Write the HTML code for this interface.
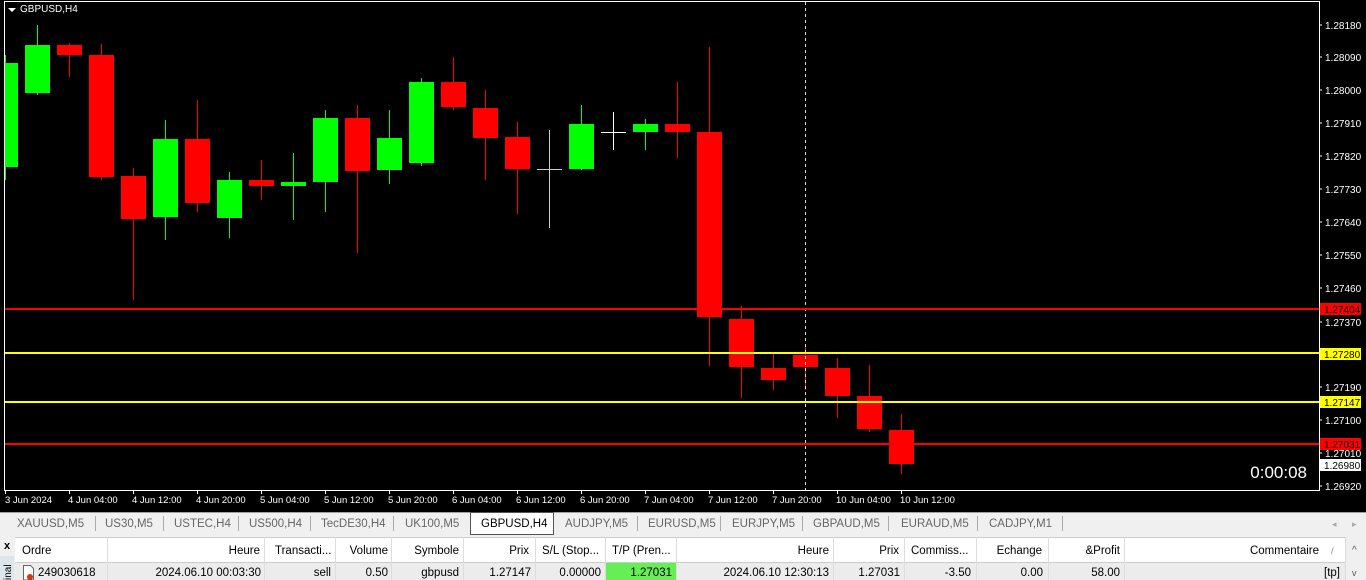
<!DOCTYPE html>
<html><head><meta charset="utf-8"><style>
html,body{margin:0;padding:0;background:#f0f0f0;width:1366px;height:580px;overflow:hidden}
svg{display:block}
text{font-family:"Liberation Sans",sans-serif}
</style></head><body>
<svg width="1366" height="580" xmlns="http://www.w3.org/2000/svg">
<rect x="0" y="0" width="1366" height="512" fill="#000"/>
<rect x="4.5" y="1.5" width="1315" height="489" fill="none" stroke="#fff" stroke-width="1"/>
<g stroke-width="1">
<line x1="5.5" y1="55" x2="5.5" y2="180" stroke="#00ff00"/><rect x="5" y="63" width="13" height="104" fill="#00ff00"/>
<line x1="37.5" y1="25" x2="37.5" y2="95" stroke="#00ff00"/><rect x="25" y="45" width="25" height="48" fill="#00ff00"/>
<line x1="69.5" y1="43" x2="69.5" y2="77" stroke="#f00"/><rect x="57" y="45" width="25" height="10" fill="#f00"/>
<line x1="101.5" y1="44" x2="101.5" y2="180" stroke="#f00"/><rect x="89" y="55" width="25" height="122" fill="#f00"/>
<line x1="133.5" y1="168" x2="133.5" y2="300" stroke="#f00"/><rect x="121" y="176" width="25" height="43" fill="#f00"/>
<line x1="165.5" y1="120" x2="165.5" y2="240" stroke="#00ff00"/><rect x="153" y="139" width="25" height="78" fill="#00ff00"/>
<line x1="197.5" y1="100" x2="197.5" y2="212" stroke="#f00"/><rect x="185" y="139" width="25" height="64" fill="#f00"/>
<line x1="229.5" y1="172" x2="229.5" y2="238" stroke="#00ff00"/><rect x="217" y="180" width="25" height="38" fill="#00ff00"/>
<line x1="261.5" y1="160" x2="261.5" y2="200" stroke="#f00"/><rect x="249" y="180" width="25" height="6" fill="#f00"/>
<line x1="293.5" y1="153" x2="293.5" y2="220" stroke="#00ff00"/><rect x="281" y="182" width="25" height="4" fill="#00ff00"/>
<line x1="325.5" y1="110" x2="325.5" y2="212" stroke="#00ff00"/><rect x="313" y="118" width="25" height="64" fill="#00ff00"/>
<line x1="357.5" y1="105" x2="357.5" y2="253" stroke="#f00"/><rect x="345" y="118" width="25" height="53" fill="#f00"/>
<line x1="389.5" y1="110" x2="389.5" y2="184" stroke="#00ff00"/><rect x="377" y="138" width="25" height="32" fill="#00ff00"/>
<line x1="421.5" y1="78" x2="421.5" y2="166" stroke="#00ff00"/><rect x="409" y="82" width="25" height="81" fill="#00ff00"/>
<line x1="453.5" y1="57" x2="453.5" y2="110" stroke="#f00"/><rect x="441" y="82" width="25" height="25" fill="#f00"/>
<line x1="485.5" y1="90" x2="485.5" y2="180" stroke="#f00"/><rect x="473" y="108" width="25" height="30" fill="#f00"/>
<line x1="517.5" y1="122" x2="517.5" y2="214" stroke="#f00"/><rect x="505" y="137" width="25" height="32" fill="#f00"/>
<line x1="549.5" y1="130" x2="549.5" y2="228" stroke="#ccc"/><line x1="537" y1="169.5" x2="562" y2="169.5" stroke="#ccc"/>
<line x1="581.5" y1="105" x2="581.5" y2="170" stroke="#00ff00"/><rect x="569" y="124" width="25" height="45" fill="#00ff00"/>
<line x1="613.5" y1="112" x2="613.5" y2="150" stroke="#fff"/><line x1="601" y1="132.5" x2="626" y2="132.5" stroke="#fff"/>
<line x1="645.5" y1="119" x2="645.5" y2="150" stroke="#00ff00"/><rect x="633" y="124" width="25" height="8" fill="#00ff00"/>
<line x1="677.5" y1="82" x2="677.5" y2="158" stroke="#f00"/><rect x="665" y="124" width="25" height="8" fill="#f00"/>
<line x1="709.5" y1="47" x2="709.5" y2="366" stroke="#f00"/><rect x="697" y="132" width="25" height="185" fill="#f00"/>
<line x1="741.5" y1="306" x2="741.5" y2="398" stroke="#f00"/><rect x="729" y="319" width="25" height="48" fill="#f00"/>
<line x1="773.5" y1="354" x2="773.5" y2="390" stroke="#f00"/><rect x="761" y="368" width="25" height="12" fill="#f00"/>
<line x1="805.5" y1="345" x2="805.5" y2="390" stroke="#f00"/><rect x="793" y="355" width="25" height="12" fill="#f00"/>
<line x1="837.5" y1="358" x2="837.5" y2="418" stroke="#f00"/><rect x="825" y="368" width="25" height="28" fill="#f00"/>
<line x1="869.5" y1="365" x2="869.5" y2="432" stroke="#f00"/><rect x="857" y="396" width="25" height="33" fill="#f00"/>
<line x1="901.5" y1="414" x2="901.5" y2="474" stroke="#f00"/><rect x="889" y="430" width="25" height="34" fill="#f00"/>
</g>
<line x1="805.5" y1="2" x2="805.5" y2="490" stroke="#ddd" stroke-dasharray="3,3"/>
<line x1="5" y1="309" x2="1319" y2="309" stroke="#f00" stroke-width="2"/>
<line x1="5" y1="353" x2="1319" y2="353" stroke="#ff0" stroke-width="2"/>
<line x1="5" y1="402" x2="1319" y2="402" stroke="#ff0" stroke-width="2"/>
<line x1="5" y1="444" x2="1319" y2="444" stroke="#f00" stroke-width="2"/>
<polygon points="8,8 16,8 12,12" fill="#fff"/>
<text x="20" y="12" font-size="10" fill="#fff">GBPUSD,H4</text>
<text x="1307" y="478" font-size="17" fill="#fff" text-anchor="end">0:00:08</text>
<g font-size="10" fill="#fff">
<text x="1325" y="29">1.28180</text><text x="1325" y="61">1.28090</text><text x="1325" y="94">1.28000</text>
<text x="1325" y="127">1.27910</text><text x="1325" y="160">1.27820</text><text x="1325" y="193">1.27730</text>
<text x="1325" y="226">1.27640</text><text x="1325" y="259">1.27550</text><text x="1325" y="292">1.27460</text>
<text x="1325" y="326">1.27370</text><text x="1325" y="391">1.27190</text><text x="1325" y="424">1.27100</text>
<text x="1325" y="457">1.27010</text><text x="1325" y="490">1.26920</text>
</g>
<g stroke="#fff"><line x1="1319" y1="25" x2="1322" y2="25"/><line x1="1319" y1="57" x2="1322" y2="57"/><line x1="1319" y1="90" x2="1322" y2="90"/><line x1="1319" y1="123" x2="1322" y2="123"/><line x1="1319" y1="156" x2="1322" y2="156"/><line x1="1319" y1="189" x2="1322" y2="189"/><line x1="1319" y1="222" x2="1322" y2="222"/><line x1="1319" y1="255" x2="1322" y2="255"/><line x1="1319" y1="288" x2="1322" y2="288"/><line x1="1319" y1="322" x2="1322" y2="322"/><line x1="1319" y1="387" x2="1322" y2="387"/><line x1="1319" y1="420" x2="1322" y2="420"/><line x1="1319" y1="453" x2="1322" y2="453"/><line x1="1319" y1="486" x2="1322" y2="486"/></g>
<rect x="1320" y="303" width="41" height="12" fill="#f00"/><text x="1324" y="313" font-size="10" fill="#000">1.27404</text>
<rect x="1320" y="348" width="41" height="12" fill="#ff0"/><text x="1324" y="358" font-size="10" fill="#000">1.27280</text>
<rect x="1320" y="396" width="41" height="12" fill="#ff0"/><text x="1324" y="406" font-size="10" fill="#000">1.27147</text>
<rect x="1320" y="438" width="41" height="12" fill="#f00"/><text x="1324" y="448" font-size="10" fill="#000">1.27031</text>
<rect x="1320" y="459" width="41" height="12" fill="#fff"/><text x="1324" y="469" font-size="10" fill="#000">1.26980</text>
<g font-size="9.5" fill="#fff">
<text x="5" y="503">3 Jun 2024</text><text x="68" y="503">4 Jun 04:00</text><text x="132" y="503">4 Jun 12:00</text><text x="196" y="503">4 Jun 20:00</text><text x="260" y="503">5 Jun 04:00</text><text x="324" y="503">5 Jun 12:00</text><text x="388" y="503">5 Jun 20:00</text><text x="452" y="503">6 Jun 04:00</text><text x="516" y="503">6 Jun 12:00</text><text x="580" y="503">6 Jun 20:00</text><text x="644" y="503">7 Jun 04:00</text><text x="708" y="503">7 Jun 12:00</text><text x="772" y="503">7 Jun 20:00</text><text x="836" y="503">10 Jun 04:00</text><text x="900" y="503">10 Jun 12:00</text>
</g>
<g stroke="#fff"><line x1="5.5" y1="490" x2="5.5" y2="494"/><line x1="69.5" y1="490" x2="69.5" y2="494"/><line x1="133.5" y1="490" x2="133.5" y2="494"/><line x1="197.5" y1="490" x2="197.5" y2="494"/><line x1="261.5" y1="490" x2="261.5" y2="494"/><line x1="325.5" y1="490" x2="325.5" y2="494"/><line x1="389.5" y1="490" x2="389.5" y2="494"/><line x1="453.5" y1="490" x2="453.5" y2="494"/><line x1="517.5" y1="490" x2="517.5" y2="494"/><line x1="581.5" y1="490" x2="581.5" y2="494"/><line x1="645.5" y1="490" x2="645.5" y2="494"/><line x1="709.5" y1="490" x2="709.5" y2="494"/><line x1="773.5" y1="490" x2="773.5" y2="494"/><line x1="837.5" y1="490" x2="837.5" y2="494"/><line x1="901.5" y1="490" x2="901.5" y2="494"/></g>
<rect x="0" y="512" width="1366" height="23" fill="#f0f0f0"/>
<line x1="0" y1="512.5" x2="1366" y2="512.5" stroke="#a0a0a0"/>
<rect x="470.5" y="512.5" width="83" height="22" fill="#fff" stroke="#555"/>
<g font-size="11.5" fill="#666">
<text x="17" y="527">XAUUSD,M5</text><text x="105" y="527">US30,M5</text><text x="174" y="527">USTEC,H4</text><text x="249" y="527">US500,H4</text><text x="321" y="527">TecDE30,H4</text><text x="405" y="527">UK100,M5</text><text x="481" y="527" fill="#000">GBPUSD,H4</text><text x="565" y="527">AUDJPY,M5</text><text x="648" y="527">EURUSD,M5</text><text x="732" y="527">EURJPY,M5</text><text x="813" y="527">GBPAUD,M5</text><text x="901" y="527">EURAUD,M5</text><text x="989" y="527">CADJPY,M1</text>
</g>
<g stroke="#aaa"><line x1="95.5" y1="516" x2="95.5" y2="531"/><line x1="163.5" y1="516" x2="163.5" y2="531"/><line x1="238.5" y1="516" x2="238.5" y2="531"/><line x1="310.5" y1="516" x2="310.5" y2="531"/><line x1="393.5" y1="516" x2="393.5" y2="531"/><line x1="637.5" y1="516" x2="637.5" y2="531"/><line x1="720.5" y1="516" x2="720.5" y2="531"/><line x1="802.5" y1="516" x2="802.5" y2="531"/><line x1="888.5" y1="516" x2="888.5" y2="531"/><line x1="977.5" y1="516" x2="977.5" y2="531"/><line x1="1062.5" y1="516" x2="1062.5" y2="531"/></g>
<text x="1332" y="527" font-size="9" fill="#aaa">◂</text><text x="1352" y="527" font-size="9" fill="#aaa">▸</text>
<rect x="0" y="535" width="1366" height="45" fill="#f0f0f0"/>
<rect x="15" y="537" width="1330" height="25" fill="#fff"/>
<rect x="15" y="562" width="1330" height="18" fill="#ececec"/>
<rect x="605" y="563" width="71" height="17" fill="#66ee55"/>
<line x1="15" y1="537.5" x2="1345" y2="537.5" stroke="#ccc"/>
<line x1="15" y1="562.5" x2="1345" y2="562.5" stroke="#ccc"/>
<g stroke="#ddd"><line x1="107.5" y1="537" x2="107.5" y2="580"/><line x1="264.5" y1="537" x2="264.5" y2="580"/><line x1="335.5" y1="537" x2="335.5" y2="580"/><line x1="391.5" y1="537" x2="391.5" y2="580"/><line x1="463.5" y1="537" x2="463.5" y2="580"/><line x1="535.5" y1="537" x2="535.5" y2="580"/><line x1="605.5" y1="537" x2="605.5" y2="580"/><line x1="676.5" y1="537" x2="676.5" y2="580"/><line x1="833.5" y1="537" x2="833.5" y2="580"/><line x1="904.5" y1="537" x2="904.5" y2="580"/><line x1="976.5" y1="537" x2="976.5" y2="580"/><line x1="1048.5" y1="537" x2="1048.5" y2="580"/><line x1="1124.5" y1="537" x2="1124.5" y2="580"/><line x1="1345.5" y1="537" x2="1345.5" y2="580"/></g>
<text x="4" y="549" font-size="11" font-weight="bold" fill="#000">x</text>
<rect x="0" y="556" width="14" height="24" fill="#dde6ee"/>
<text transform="translate(11,580) rotate(-90)" font-size="10" fill="#000">inal</text>
<g font-size="11.5" fill="#000">
<text x="22" y="554">Ordre</text>
<text x="260" y="554" text-anchor="end">Heure</text>
<text x="275" y="554">Transacti...</text>
<text x="388" y="554" text-anchor="end">Volume</text>
<text x="459" y="554" text-anchor="end">Symbole</text>
<text x="529" y="554" text-anchor="end">Prix</text>
<text x="542" y="554">S/L (Stop...</text>
<text x="612" y="554">T/P (Pren...</text>
<text x="829" y="554" text-anchor="end">Heure</text>
<text x="899" y="554" text-anchor="end">Prix</text>
<text x="911" y="554">Commiss...</text>
<text x="1042" y="554" text-anchor="end">Echange</text>
<text x="1120" y="554" text-anchor="end">&amp;Profit</text>
<text x="1319" y="554" text-anchor="end">Commentaire</text>
<text x="1331" y="554" fill="#888" font-size="9">/</text>
<text x="1352" y="553" font-size="10" fill="#555">^</text>
<text x="38" y="576">249030618</text>
<text x="261" y="576" text-anchor="end">2024.06.10 00:03:30</text>
<text x="331" y="576" text-anchor="end">sell</text>
<text x="388" y="576" text-anchor="end">0.50</text>
<text x="459" y="576" text-anchor="end">gbpusd</text>
<text x="531" y="576" text-anchor="end">1.27147</text>
<text x="601" y="576" text-anchor="end">0.00000</text>
<text x="672" y="576" text-anchor="end">1.27031</text>
<text x="829" y="576" text-anchor="end">2024.06.10 12:30:13</text>
<text x="900" y="576" text-anchor="end">1.27031</text>
<text x="971" y="576" text-anchor="end">-3.50</text>
<text x="1043" y="576" text-anchor="end">0.00</text>
<text x="1120" y="576" text-anchor="end">58.00</text>
<text x="1340" y="576" text-anchor="end">[tp]</text>
<text x="1352" y="576" font-size="9" fill="#555">v</text>
</g>
<path d="M23.5,565.5h7l3,3v11.5h-10z" fill="#fff" stroke="#666"/>
<circle cx="30" cy="577" r="3" fill="#e03010"/>
</svg>
</body></html>
